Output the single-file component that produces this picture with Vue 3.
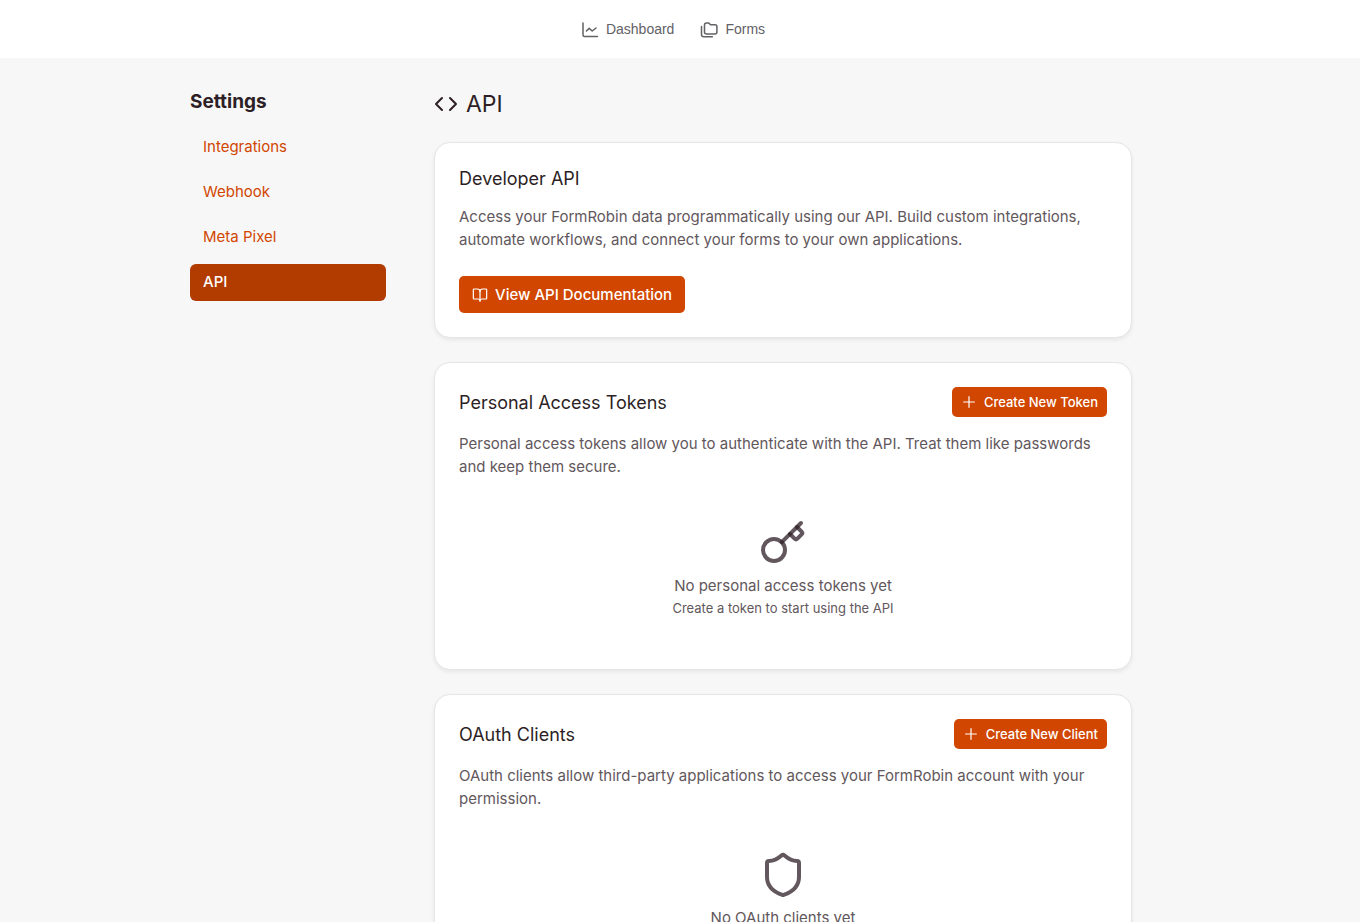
<script setup>
import { ref } from 'vue'

const active = ref('API')
const menu = ['Integrations', 'Webhook', 'Meta Pixel', 'API']
</script>

<template>
  <div class="page">
    <header class="topbar">
      <nav class="topnav">
        <a href="#dashboard">
          <svg class="icon" viewBox="0 0 18 18">
            <path d="M2 2v12a1.6 1.6 0 0 0 1.6 1.6H16.4" />
            <path d="m5.4 10 2.8-2.6 3 2.6 3.8-3" />
          </svg>
          Dashboard
        </a>
        <a href="#forms">
          <svg class="icon" viewBox="0 0 18 18">
            <path d="M6.5 2h2.3l1.7 1.8h4.6a1.8 1.8 0 0 1 1.8 1.8v5.4a2 2 0 0 1-2 2H6.5a2 2 0 0 1-2-2V4a2 2 0 0 1 2-2z" />
            <path d="M1.5 5.6v7.8a2.3 2.3 0 0 0 2.3 2.3h8.6" />
          </svg>
          Forms
        </a>
      </nav>
    </header>

    <div class="layout">
      <aside class="sidebar">
        <h2>Settings</h2>
        <nav class="menu">
          <a
            v-for="item in menu"
            :key="item"
            href="#"
            :class="{ active: item === active }"
            @click.prevent="active = item"
          >{{ item }}</a>
        </nav>
      </aside>

      <main class="content">
        <h1>
          <svg class="icon" viewBox="0 0 24 24">
            <path d="m16 18 6-6-6-6" />
            <path d="m8 6-6 6 6 6" />
          </svg>
          API
        </h1>

        <section class="card">
          <h3>Developer API</h3>
          <p class="text">
            Access your FormRobin data programmatically using our API. Build custom integrations,
            automate workflows, and connect your forms to your own applications.
          </p>
          <a class="btn" href="#docs">
            <svg class="icon" viewBox="0 0 24 24">
              <path d="M12 7v14" />
              <path d="M3 18a1 1 0 0 1-1-1V4a1 1 0 0 1 1-1h5a4 4 0 0 1 4 4 4 4 0 0 1 4-4h5a1 1 0 0 1 1 1v13a1 1 0 0 1-1 1h-6a3 3 0 0 0-3 3 3 3 0 0 0-3-3z" />
            </svg>
            View API Documentation
          </a>
        </section>

        <section class="card">
          <div class="card-head">
            <h3>Personal Access Tokens</h3>
            <button type="button" class="btn btn-sm">
              <svg class="icon" viewBox="0 0 24 24"><path d="M4 12h16M12 4v16" /></svg>
              Create New Token
            </button>
          </div>
          <p class="text">
            Personal access tokens allow you to authenticate with the API. Treat them like passwords
            and keep them secure.
          </p>
          <div class="empty">
            <svg class="icon" viewBox="0 0 24 24">
              <path d="m15.5 7.5 2.3 2.3a1 1 0 0 0 1.4 0l2.1-2.1a1 1 0 0 0 0-1.4L19 4" />
              <path d="m21 2-9.6 9.6" />
              <circle cx="7.5" cy="15.5" r="5.5" />
            </svg>
            <p>No personal access tokens yet</p>
            <small>Create a token to start using the API</small>
          </div>
        </section>

        <section class="card">
          <div class="card-head">
            <h3>OAuth Clients</h3>
            <button type="button" class="btn btn-sm">
              <svg class="icon" viewBox="0 0 24 24"><path d="M4 12h16M12 4v16" /></svg>
              Create New Client
            </button>
          </div>
          <p class="text">
            OAuth clients allow third-party applications to access your FormRobin account with your
            permission.
          </p>
          <div class="empty">
            <svg class="icon" viewBox="0 0 24 24">
              <path d="M20 13c0 5-3.5 7.5-7.66 8.95a1 1 0 0 1-.67-.01C7.5 20.5 4 18 4 13V6a1 1 0 0 1 1-1c2 0 4.5-1.2 6.24-2.72a1.17 1.17 0 0 1 1.52 0C14.51 3.81 17 5 19 5a1 1 0 0 1 1 1z" />
            </svg>
            <p>No OAuth clients yet</p>
          </div>
        </section>
      </main>
    </div>
  </div>
</template>

<style>
html { scrollbar-width: none; }
body { margin: 0; background: #f7f7f7; }
</style>

<style scoped>
.page { font-family: Inter, 'Liberation Sans', sans-serif; font-size: 15px; line-height: 23px; color: #2d1f25; }
.page * { box-sizing: border-box; }
h1, h2, h3, p { margin: 0; }
a { text-decoration: none; }
.icon { fill: none; stroke: currentColor; stroke-width: 2; stroke-linecap: round; stroke-linejoin: round; flex-shrink: 0; }

.topbar { background: #fff; padding: 18px 14px 17px 0; display: flex; align-items: center; justify-content: center; }
.topnav { display: flex; gap: 26px; }
.topnav a { display: flex; align-items: center; gap: 7px; font-family: 'Liberation Sans', sans-serif; font-size: 14px; color: #626166; }
.topnav .icon { width: 18px; height: 18px; stroke-width: 1.5; }

.page .layout { display: flex; gap: 48px; box-sizing: content-box; max-width: 942px; margin: 0 auto; padding: 32px 38px 32px 0; }
.sidebar { width: 196px; flex-shrink: 0; }
.sidebar h2 { font-size: 19px; font-weight: 700; line-height: 23px; margin-bottom: 16px; }
.menu { display: flex; flex-direction: column; gap: 8px; }
.menu a { padding: 6px 13px 8px; border-radius: 6px; color: #d14600; }
.menu a.active { background: #b23b00; color: #fff; font-weight: 500; }

.content { flex: 1; min-width: 0; display: flex; flex-direction: column; gap: 24px; }
h1 { display: flex; align-items: center; gap: 8px; font-size: 23px; font-weight: 400; line-height: 28px; }
h1 .icon { width: 24px; height: 24px; }
h3 { font-size: 18px; font-weight: 400; line-height: 23px; }

.card { background: #fff; border: 1px solid #e6e6e6; border-radius: 16px; padding: 24px; box-shadow: 0 2px 4px rgba(0, 0, 0, 0.07); }
.card-head { display: flex; align-items: center; justify-content: space-between; margin-bottom: 15px; }
.card > h3 { margin-bottom: 15px; }
.text { color: #62575c; }
.card > .btn { margin-top: 25px; }

.btn { display: inline-flex; align-items: center; gap: 7px; padding: 7px 13px; border: none; border-radius: 5px; background: #d14600; color: #fff; font-family: inherit; font-size: 15px; font-weight: 500; line-height: 23px; cursor: pointer; }
.btn:hover { background: #b23b00; }
.btn .icon { width: 16px; height: 16px; stroke-width: 1.8; }
.btn-sm { padding: 5px 9px; font-size: 13px; line-height: 20px; }

.empty { display: flex; flex-direction: column; align-items: center; padding: 41px 0 25px; color: #62575c; }
.empty .icon { width: 48px; height: 48px; color: #2d1f25; stroke-opacity: 0.75; margin-bottom: 7px; }
.empty small { font-size: 13px; line-height: 23px; }
</style>
